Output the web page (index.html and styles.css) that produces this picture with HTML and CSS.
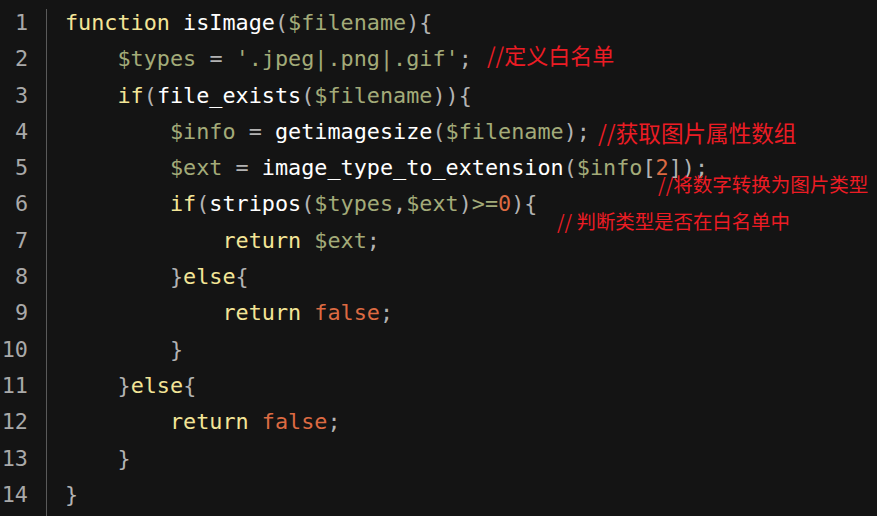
FILE: index.html
```html
<!DOCTYPE html>
<html lang="zh">
<head>
<meta charset="utf-8">
<title>isImage</title>
<link rel="stylesheet" href="styles.css">
</head>
<body>
<div class="editor">
  <div class="gutter">
    <div>1</div><div>2</div><div>3</div><div>4</div><div>5</div><div>6</div><div>7</div>
    <div>8</div><div>9</div><div>10</div><div>11</div><div>12</div><div>13</div><div>14</div>
  </div>
  <div class="divider"></div>
  <div class="code">
    <div class="ln"><span class="k">function</span> <span class="f">isImage</span><span class="p">(</span><span class="v">$filename</span><span class="p">){</span></div>
    <div class="ln">    <span class="v">$types</span> <span class="p">=</span> <span class="s">'.jpeg|.png|.gif'</span><span class="p">;</span></div>
    <div class="ln">    <span class="k">if</span><span class="p">(</span><span class="f">file_exists</span><span class="p">(</span><span class="v">$filename</span><span class="p">)){</span></div>
    <div class="ln">        <span class="v">$info</span> <span class="p">=</span> <span class="f">getimagesize</span><span class="p">(</span><span class="v">$filename</span><span class="p">);</span></div>
    <div class="ln">        <span class="v">$ext</span> <span class="p">=</span> <span class="f">image_type_to_extension</span><span class="p">(</span><span class="v">$info</span><span class="p">[</span><span class="n">2</span><span class="p">]);</span></div>
    <div class="ln">        <span class="k">if</span><span class="p">(</span><span class="f">stripos</span><span class="p">(</span><span class="v">$types</span><span class="p">,</span><span class="v">$ext</span><span class="p">)</span><span class="o">&gt;=</span><span class="n">0</span><span class="p">){</span></div>
    <div class="ln">            <span class="k">return</span> <span class="v">$ext</span><span class="p">;</span></div>
    <div class="ln">        <span class="p">}</span><span class="k">else</span><span class="p">{</span></div>
    <div class="ln">            <span class="k">return</span> <span class="n">false</span><span class="p">;</span></div>
    <div class="ln">        <span class="p">}</span></div>
    <div class="ln">    <span class="p">}</span><span class="k">else</span><span class="p">{</span></div>
    <div class="ln">        <span class="k">return</span> <span class="n">false</span><span class="p">;</span></div>
    <div class="ln">    <span class="p">}</span></div>
    <div class="ln"><span class="p">}</span></div>
    <span class="note note1">//定义白名单</span>
    <span class="note note2">//获取图片属性数组</span>
    <span class="note note3">//将数字转换为图片类型</span>
    <span class="note note4">// 判断类型是否在白名单中</span>
  </div>
</div>
</body>
</html>
```
FILE: styles.css
```css
html, body {
  margin: 0;
  padding: 0;
  background: #141414;
}
.editor {
  display: flex;
  width: 877px;
  height: 516px;
  overflow: hidden;
  background: #141414;
  font-family: "DejaVu Sans Mono", "Liberation Mono", monospace;
  font-size: 21.8px;
  line-height: 36.3px;
}
.gutter {
  width: 46px;
  box-sizing: border-box;
  padding: 5px 18px 0 0;
  text-align: right;
  color: #a9a9a9;
}
.gutter div {
  height: 36.3px;
}
.divider {
  width: 1px;
  margin-top: 9px;
  background: #5a5a5a;
}
.code {
  position: relative;
  flex: 1;
  padding: 5px 0 0 18px;
  color: #f2f2f2;
}
.ln {
  height: 36.3px;
  white-space: pre;
}
.k { color: #f3e597; }
.f { color: #ffffff; }
.v { color: #a3ab79; }
.s { color: #a3ab79; }
.p { color: #b3b3b3; }
.o { color: #a3ab79; }
.n { color: #dc6a42; }
.note {
  position: absolute;
  color: #ec1c24;
  font-family: "Noto Sans CJK SC", "Noto Sans", sans-serif;
  line-height: 1;
  white-space: nowrap;
}
.note1 { left: 440px; top: 43px; font-size: 22px; }
.note2 { left: 551px; top: 122px; font-size: 22.6px; }
.note3 { left: 611px; top: 174px; font-size: 19.5px; }
.note4 { left: 510px; top: 211px; font-size: 19.4px; }
```
